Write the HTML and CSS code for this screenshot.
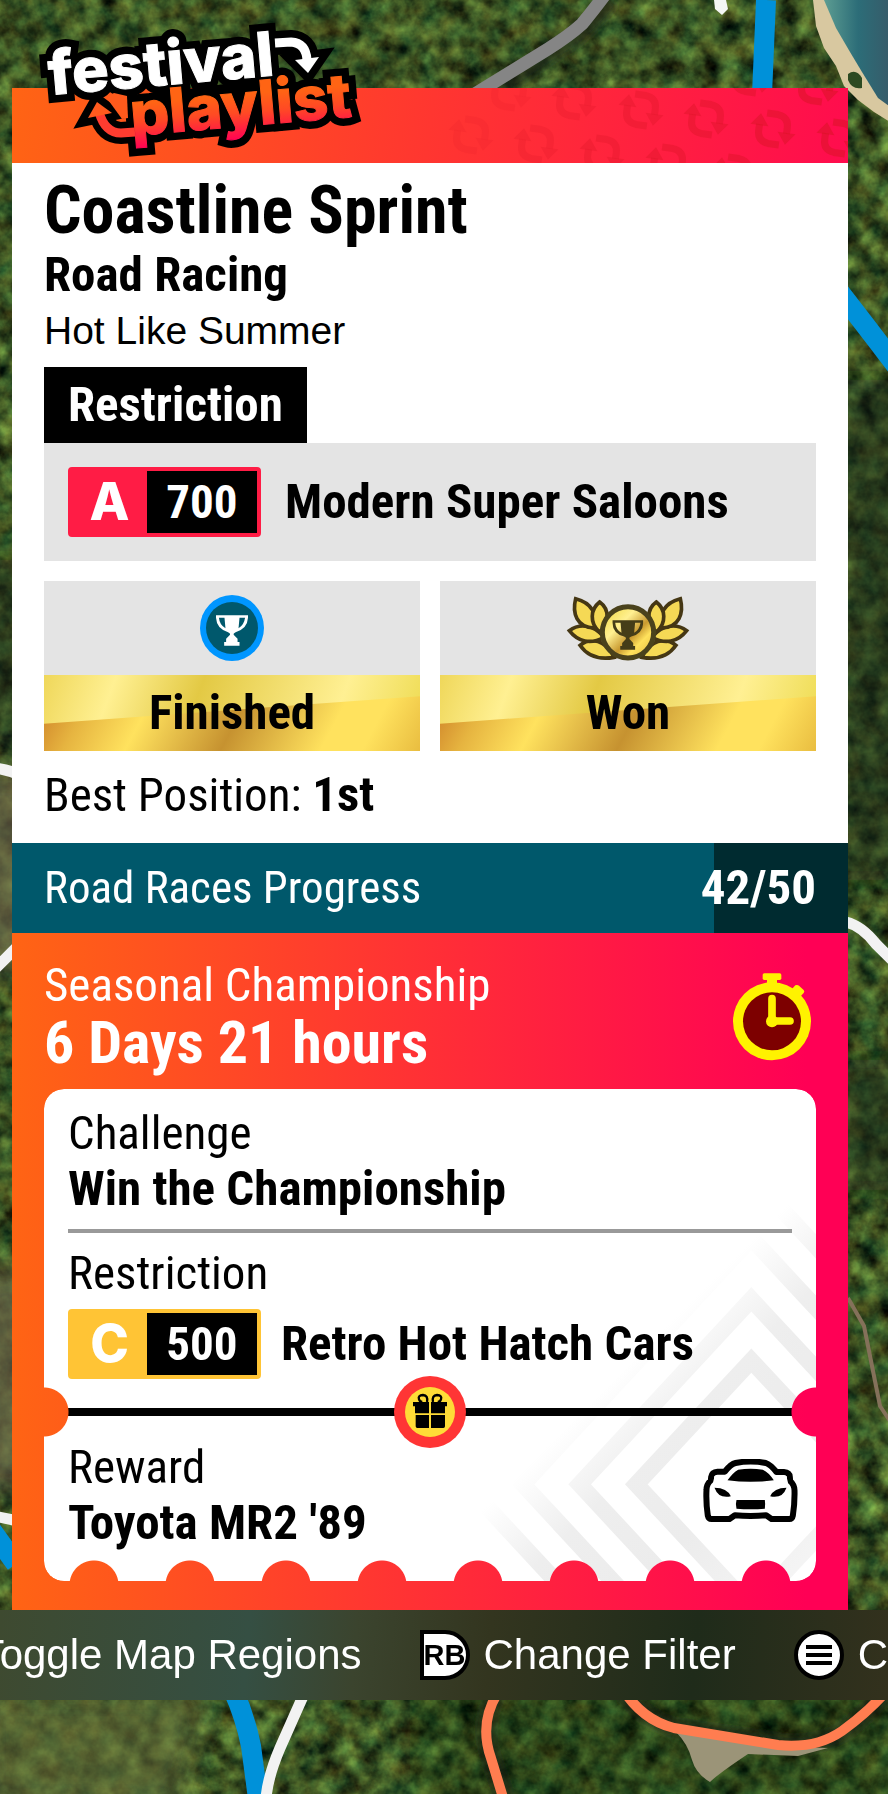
FILE: index.html
```html
<!DOCTYPE html>
<html lang="en">
<head>
  <meta charset="UTF-8" />
  <meta name="viewport" content="width=device-width, initial-scale=1.0" />
  <title>Festival Playlist - Coastline Sprint</title>
  <link rel="stylesheet" href="styles.css">
</head>
<body>

<!-- Map -->
<svg class="map" viewBox="0 0 888 1794" preserveAspectRatio="xMidYMid slice" aria-hidden="true">
  <defs>
    <filter id="trees" x="0" y="0" width="100%" height="100%" color-interpolation-filters="sRGB">
      <feTurbulence type="fractalNoise" baseFrequency="0.05" numOctaves="4" seed="21" />
      <feColorMatrix values="0.55 0.25 0 0 -0.17  0.55 0.5 0 0 -0.2  0.2 0.25 0 0 -0.09  0 0 0 0 1" />
    </filter>
    <filter id="soft"><feGaussianBlur stdDeviation="14" /></filter>
    <filter id="edge" x="-20%" y="-20%" width="140%" height="140%"><feGaussianBlur stdDeviation="3" /></filter>
    <linearGradient id="sea" x1="0" y1="0" x2="1" y2="0">
      <stop offset="0" stop-color="#5d9d92" />
      <stop offset="0.5" stop-color="#2c6d78" />
      <stop offset="1" stop-color="#375a68" />
    </linearGradient>
  </defs>
  <rect width="888" height="1794" filter="url(#trees)" />
  <g filter="url(#soft)">
    <path d="M836 380h80v500h-80zM836 1060h80v130h-80z" fill="#10200f" opacity="0.5" />
    <path d="M-20 560h50v180h-50z" fill="#14240f" opacity="0.5" />
    <path d="M-20 770h50v200h-50zM-20 1270h50v220h-50z" fill="#6b6349" opacity="0.75" />
    <path d="M-20 1690h230l-30 120h-200z" fill="#68703c" opacity="0.6" />
    <path d="M410 1690h500v120h-500z" fill="#10240f" opacity="0.25" />
  </g>
  <!-- coast -->
  <path d="M813 0l3 26 8 22 12 18 8 20 14 14 16 12 16 10V0z" fill="#d8c8a0" />
  <path d="M824 0l12 28 14 24 12 20 16 26 14 10V0z" fill="url(#sea)" />
  <path d="M848 74q8-6 14 4v10q-10 2-14-8z" fill="#2d4a22" />
  <path d="M714 0h12l2 9-6 6-7-6z" fill="#f4f6f4" />
  <!-- roads -->
  <g fill="none">
    <path d="M480 100l84-56q20-12 46-44" stroke="#1a2214" stroke-width="20" opacity="0.6" filter="url(#edge)" />
    <path d="M470 97l78-48q22-14 34-25 10-12 22-28" stroke="#858585" stroke-width="13" />
    <path d="M766 0l-4 95M838 290q28 36 60 78M-10 1528l26 36M233 1690q12 26 18 56 4 30 8 60" stroke="#0091d9" stroke-width="20" />
    <path d="M-6 768q16 2 28 8M-6 970l24-24M846 922q16 4 30 22l20 20M-6 1516l24 5M304 1694l-24 54q-12 28-14 50" stroke="#f2f2f2" stroke-width="11" />
    <path d="M496 1694q-16 30-6 60l16 48M622 1690q20 28 52 38l108 16q40 4 66-16 26-20 44-44" stroke="#1a2214" stroke-width="18" opacity="0.7" filter="url(#edge)" />
    <path d="M676 1732l92 14 60 2-30 8-50-2q-30 20-38 28-14-8-18-22-4-16-16-28z" fill="#9b9478" />
    <path d="M497 1694q-18 30-6 64l14 46M622 1688q20 32 52 40l104 17q38 4 64-14 28-20 50-46" stroke="#ff7d50" stroke-width="10" />
    <path d="M848 1298l16 28 8 40 8 40 12 18" stroke="#84715a" stroke-width="4" />
  </g>
</svg>

<!-- Shared drawings -->
<svg class="defs" aria-hidden="true">
  <symbol id="trophy" viewBox="0 0 98 94">
    <path fill-rule="evenodd" d="M0 0h98v8q-2 34-38 44-8 3-6 8l12 12v10h6v12H25V82h6V72l12-12q2-5-6-8Q2 42 0 8zM9 8q2 22 20 32L26 8zM89 8H72l-3 32Q86 30 89 8z" />
  </symbol>
  <g id="loop">
    <path d="M-8-15H3Q14-14 14-3v6" fill="none" stroke="currentColor" stroke-width="7" />
    <path d="M5 2h18L14 14z" fill="currentColor" />
    <path d="M8 15H-3Q-14 14-14 3v-6" fill="none" stroke="currentColor" stroke-width="7" />
    <path d="M-5-2h-18L-14-14z" fill="currentColor" />
  </g>
</svg>

<main class="screen">
  <article class="event">

    <header class="banner">
      <svg class="banner-pattern" viewBox="0 0 420 75" preserveAspectRatio="xMaxYMid slice" aria-hidden="true">
        <use href="#loop" transform="translate(81 4) rotate(8)" opacity="0.25" />
        <use href="#loop" transform="translate(146 13) rotate(8)" opacity="0.45" />
        <use href="#loop" transform="translate(213 22) rotate(8)" opacity="0.6" />
        <use href="#loop" transform="translate(278 31) rotate(8)" opacity="0.75" />
        <use href="#loop" transform="translate(345 41) rotate(8)" opacity="0.9" />
        <use href="#loop" transform="translate(411 50) rotate(8)" />
        <use href="#loop" transform="translate(43 47) rotate(8)" opacity="0.25" />
        <use href="#loop" transform="translate(108 56) rotate(8)" opacity="0.4" />
        <use href="#loop" transform="translate(174 66) rotate(8)" opacity="0.55" />
        <use href="#loop" transform="translate(240 75) rotate(8)" opacity="0.7" />
        <use href="#loop" transform="translate(306 85) rotate(8)" opacity="0.8" />
        <use href="#loop" transform="translate(322 -11) rotate(8)" opacity="0.8" />
        <use href="#loop" transform="translate(388 -2) rotate(8)" />
      </svg>
      <svg class="logo" viewBox="40 16 330 146" role="img" aria-label="festival playlist">
        <defs>
          <linearGradient id="playlist-fill" gradientUnits="userSpaceOnUse" x1="0" y1="-32" x2="0" y2="14">
            <stop offset="0" stop-color="#ff6414" />
            <stop offset="0.4" stop-color="#ff4a24" />
            <stop offset="1" stop-color="#ff0055" />
          </linearGradient>
        </defs>
        <g class="logo-outline">
          <text transform="translate(50 95) rotate(-5)">festival</text>
          <text transform="translate(132 136) rotate(-5)">playlist</text>
          <path d="M275 43l16-1q15 1 16 17" fill="none" stroke-width="24" />
          <path d="M295 60l24-3-11 16zM88 118l9-16 15 11z" stroke-width="15" stroke-linejoin="miter" />
          <path d="M99 112q6 21 22 21l14-1" fill="none" stroke-width="22" />
          <path d="M150 94l120-16 40 6-12 26-130 12z" stroke="none" />
        </g>
        <path d="M106 97l8-4 13 3 1 22-6 1z" fill="#ff5a1c" />
        <g class="logo-face">
          <path d="M275 43l16-1q15 1 16 18" fill="none" stroke="#fff" stroke-width="9" />
          <path d="M295 60l24-3-11 16z" fill="#fff" />
          <path d="M99 112q6 21 22 21l14-1" fill="none" stroke="#ff3c30" stroke-width="9" />
          <path d="M88 118l9-16 15 11z" fill="#ff5a1e" />
          <text transform="translate(50 95) rotate(-5)">festival</text>
          <text class="logo-playlist" transform="translate(132 136) rotate(-5)">playlist</text>
        </g>
      </svg>
    </header>

    <section class="details">
      <h1>Coastline Sprint</h1>
      <h2>Road Racing</h2>
      <p class="series">Hot Like Summer</p>

      <h3 class="tag">Restriction</h3>
      <div class="restriction">
        <span class="class-badge class-a"><b>A</b><span>700</span></span>
        <strong>Modern Super Saloons</strong>
      </div>

      <div class="results">
        <div class="result">
          <div class="result-icon">
            <svg width="66" height="66" viewBox="0 0 66 66" aria-hidden="true">
              <ellipse cx="33" cy="33" rx="32" ry="33" fill="#0096ff" />
              <ellipse cx="33" cy="33" rx="26" ry="26" fill="#00586c" />
              <use href="#trophy" x="17" y="20" width="32" height="31" fill="#fff" />
            </svg>
          </div>
          <p class="gold">Finished</p>
        </div>
        <div class="result">
          <div class="result-icon">
            <svg width="124" height="66" viewBox="366 465 372 198" aria-hidden="true">
              <defs>
                <linearGradient id="coin" x1="0" y1="0" x2="1" y2="1">
                  <stop offset="0.1" stop-color="#f3dc50" />
                  <stop offset="0.35" stop-color="#fff091" />
                  <stop offset="0.58" stop-color="#c99a30" />
                  <stop offset="0.72" stop-color="#ffe15c" />
                  <stop offset="1" stop-color="#e0b63c" />
                </linearGradient>
                <g id="laurel" fill="#f5d955" stroke="#453714" stroke-width="11">
                  <path d="M408 616C440 590 486 600 510 652 465 660 430 648 408 616z" />
                  <path d="M376 572C405 550 450 552 480 592 440 614 402 606 376 572z" />
                  <path d="M395 476C384 520 398 562 451 564 462 525 444 488 395 476z" />
                  <path d="M467 486C439 508 436 548 466 576 496 552 498 508 467 486z" />
                </g>
              </defs>
              <use href="#laurel" />
              <use href="#laurel" transform="translate(1104 0) scale(-1 1)" />
              <circle cx="552" cy="577" r="77" fill="url(#coin)" stroke="#4a421c" stroke-width="15" />
              <use href="#trophy" x="505" y="540" width="93" height="90" fill="#453d18" />
            </svg>
          </div>
          <p class="gold">Won</p>
        </div>
      </div>

      <p class="best">Best Position: <b>1st</b></p>
    </section>

    <section class="progress-row">
      <progress id="races" max="50" value="42"></progress>
      <label for="races">Road Races Progress</label>
      <b>42/50</b>
    </section>

    <section class="seasonal">
      <div class="seasonal-head">
        <div>
          <p>Seasonal Championship</p>
          <p class="time-left">6 Days 21 hours</p>
        </div>
        <svg class="stopwatch" width="78" height="88" viewBox="399 460 234 264" aria-hidden="true">
          <g fill="#fff200">
            <rect x="488" y="461" width="56" height="20" rx="5" />
            <path d="M501 478h30v20h-30zM576 508l10-11q6-3 11 1l14 13q4 5 0 9l-11 12z" />
            <circle cx="516" cy="605" r="117" />
          </g>
          <circle cx="516" cy="605" r="87" fill="#7d0000" />
          <path d="M516 537v67h54" fill="none" stroke="#fff200" stroke-width="23" stroke-linecap="round" />
          <circle cx="516" cy="605" r="18" fill="#fff200" />
        </svg>
      </div>

      <div class="ticket">
        <svg class="ticket-pattern" viewBox="0 0 1068 1203" aria-hidden="true">
          <defs>
            <linearGradient id="fade" gradientUnits="userSpaceOnUse" x1="530" y1="530" x2="1110" y2="1110">
              <stop offset="0" stop-color="#fff" />
              <stop offset="0.28" stop-color="#eee" />
              <stop offset="0.6" stop-color="#ececec" />
              <stop offset="1" stop-color="#f5f5f5" />
            </linearGradient>
          </defs>
          <g fill="none" stroke="url(#fade)" stroke-width="50">
            <path d="M874 542l345 371-345 371-345-371z" />
            <path d="M874 358l515 555-515 555-515-555z" />
            <path d="M874 174l685 739-685 739-685-739z" />
            <path d="M874-10l856 923-856 923L18 913z" />
          </g>
        </svg>

        <div class="ticket-part">
          <p>Challenge</p>
          <p><b>Win the Championship</b></p>
        </div>
        <hr>
        <div class="ticket-part">
          <p>Restriction</p>
          <div class="ticket-class">
            <span class="class-badge class-c"><b>C</b><span>500</span></span>
            <strong>Retro Hot Hatch Cars</strong>
          </div>
        </div>
        <div class="tear">
          <svg class="gift" width="72" height="72" viewBox="0 0 216 216" aria-hidden="true">
            <circle cx="108" cy="108" r="108" fill="#ff3535" />
            <circle cx="108" cy="108" r="75" fill="#ffdc37" />
            <path d="M57 78h48v34H63V91h-6zM111 78h48v13h-6v21h-42zM65 117h40v39H70q-5 0-5-5zM111 117h42v34q0 5-5 5h-37z" />
            <path d="M99 78q4-20-12-21-16 1-12 13 2 8 10 8M117 78q-4-20 12-21 16 1 12 13-2 8-10 8" fill="none" stroke="#000" stroke-width="7" />
          </svg>
        </div>
        <div class="reward">
          <div class="ticket-part">
            <p>Reward</p>
            <p><b>Toyota MR2 '89</b></p>
          </div>
          <svg class="car" width="95" height="64" viewBox="728 834 284 192" aria-hidden="true">
            <path d="M793 872q18-23 32-26 45-9 91 0 13 4 32 27l22 0q17 1 18 15l1 12q13 12 13 28 1 40-5 76-2 10-10 10l-54 0-16-11q-47 4-94 0l-16 11-54 0q-9 0-11-10-6-38-4-78 0-16 13-28l1-10q2-15 19-16z" fill="#fff" stroke="#000" stroke-width="18" stroke-linejoin="round" />
            <path d="M762 885q12-5 20 0l10 6q-12 4-22 10l-14 14M978 885q-12-5-20 0l-10 6q12 4 22 10l14 14" fill="#fff" />
            <path d="M801 898q16-23 32-32 37-5 74 0 18 8 33 32-70 9-139 0zM762 920q38 0 49 26-37 8-49-26zM978 920q-38 0-49 26 37 8 49-26zM828 957h85q2 14 0 26-42 3-85 0-4-13 0-26z" />
          </svg>
        </div>
      </div>
    </section>
  </article>

  <!-- Controls -->
  <nav class="controls">
    <button type="button">Toggle Map Regions</button>
    <button type="button">
      <span class="key-rb">RB</span>
      Change Filter
    </button>
    <button type="button">
      <svg width="50" height="50" viewBox="0 0 50 50" aria-hidden="true">
        <circle cx="25" cy="25" r="23" fill="#fff" stroke="#000" stroke-width="4" />
        <path d="M12 17h26M12 25h26M12 33h26" stroke="#000" stroke-width="4" />
      </svg>
      C
    </button>
  </nav>
</main>

</body>
</html>
```

FILE: styles.css
```css
* {
  box-sizing: border-box;
}

body {
  margin: 0;
  background: #2c4020;
  color: #000;
  font-family: "Roboto Condensed", "Liberation Sans Narrow", "Liberation Sans", sans-serif;
  font-size: 47px;
  line-height: 56px;
}

h1, h2, h3, p {
  margin: 0;
}

h2, h3, b, strong {
  font-size: 49px;
  font-weight: bold;
}

.map {
  position: absolute;
  inset: 0;
  z-index: -1;
  width: 100%;
  height: 100%;
}

.defs {
  position: absolute;
  width: 0;
  height: 0;
}

.screen {
  position: relative;
  padding: 88px 0 94px;
  overflow: hidden;
}

.event {
  margin: 0 40px 0 12px;
}

/* banner */
.banner {
  position: relative;
  height: 75px;
  background: linear-gradient(98deg, #ff6414, #ff3630 50%, #ff0c4e);
}

.banner-pattern {
  position: absolute;
  top: 0;
  right: 0;
  width: 420px;
  height: 75px;
  color: rgba(215, 20, 35, 0.5);
}

.logo {
  position: absolute;
  top: -72px;
  left: 28px;
  width: 330px;
  height: 146px;
  overflow: visible;
  font-family: Inter, "Liberation Sans", sans-serif;
  font-size: 61px;
  font-weight: 800;
}

.logo-outline {
  fill: #000;
  stroke: #000;
  stroke-width: 16px;
}

.logo-face text {
  fill: #fff;
  stroke: #fff;
  stroke-width: 1px;
}

.logo-face .logo-playlist {
  fill: url(#playlist-fill);
  stroke: url(#playlist-fill);
}

/* event details */
.details {
  padding: 16px 32px 20px;
  background: #fff;
}

.details h1 {
  margin-bottom: 4px;
  font-size: 66px;
  line-height: 64px;
}

.series {
  margin: 4px 0 12px;
  font-family: "Liberation Sans", sans-serif;
  font-size: 39px;
  line-height: 48px;
}

.tag {
  width: fit-content;
  padding: 10px 24px;
  background: #000;
  color: #fff;
}

.restriction {
  display: flex;
  align-items: center;
  gap: 24px;
  padding: 24px;
  background: #e4e4e4;
}

.class-badge {
  display: grid;
  grid-template-columns: 75px 110px;
  flex: none;
  border: 4px solid;
  border-radius: 4px;
  font-weight: bold;
  line-height: 62px;
  text-align: center;
}

.class-badge b {
  color: #fff;
  font-family: Inter, "Liberation Sans", sans-serif;
  font-size: 52px;
  font-weight: 800;
}

.class-badge span {
  background: #000;
  color: #fff;
  font-size: 47px;
}

.class-a {
  background: #ff1c45;
  border-color: #ff1c45;
}

.class-c {
  background: #ffc435;
  border-color: #ffc435;
}

.results {
  display: grid;
  grid-template-columns: 1fr 1fr;
  gap: 20px;
  margin: 20px 0 16px;
}

.result-icon {
  display: flex;
  align-items: center;
  justify-content: center;
  height: 94px;
  background: #e4e4e4;
}

.gold {
  position: relative;
  z-index: 0;
  padding: 10px;
  background: linear-gradient(110deg, #efd75a, #fff092 18%, #e3c944 40%, #fff093 76%, #ecd94c);
  font-size: 49px;
  font-weight: bold;
  text-align: center;
}

.gold::before {
  content: "";
  position: absolute;
  inset: 0;
  z-index: -1;
  background: linear-gradient(118deg, #cf8328 3%, #e6b440 14%, #ffe25e 29%, #c69230 52%, #ffe25e 76%, #ffe25e 86%, #e9bd40);
  clip-path: polygon(0 64%, 100% 28%, 100% 100%, 0 100%);
}

/* progress */
.progress-row {
  position: relative;
  display: flex;
  align-items: center;
  justify-content: space-between;
  height: 90px;
  padding: 0 32px;
  color: #fff;
}

.progress-row label {
  font-size: 45px;
}

.progress-row progress {
  position: absolute;
  inset: 0;
  z-index: -1;
  width: 100%;
  height: 100%;
  border: 0;
  appearance: none;
}

.progress-row progress::-webkit-progress-bar {
  background: #002b30;
}

.progress-row progress::-webkit-progress-value {
  background: #00586b;
}

/* seasonal championship */
.seasonal {
  padding: 24px 32px 29px;
  background: linear-gradient(90deg, #ff6414, #ff2d37 52%, #ff0055 95%);
}

.seasonal-head {
  display: flex;
  align-items: flex-end;
  justify-content: space-between;
  padding-right: 5px;
  color: #fff;
}

.time-left {
  font-size: 60px;
  font-weight: bold;
  line-height: 60px;
}

.stopwatch {
  margin-bottom: 12px;
}

.ticket {
  position: relative;
  z-index: 0;
  margin-top: 16px;
  padding: 16px 24px 30px;
  border-radius: 20px;
  background: #fff;
  /* side notches and the perforated bottom edge */
  -webkit-mask:
    radial-gradient(circle at 0 calc(100% - 169px), transparent 24px, #000 25px),
    radial-gradient(circle at 100% calc(100% - 169px), transparent 24px, #000 25px),
    radial-gradient(circle at 48px calc(100% + 4px), transparent 24px, #000 25px) 2px 0 / 96px 100% repeat-x;
  -webkit-mask-composite: source-in;
  mask-composite: intersect;
}

.ticket-pattern {
  position: absolute;
  right: 0;
  bottom: 0;
  z-index: -1;
  width: 356px;
  height: 401px;
}

.ticket hr {
  height: 4px;
  margin: 12px 0;
  border: 0;
  background: #999;
}

.ticket-class {
  display: flex;
  align-items: center;
  gap: 20px;
  margin-top: 8px;
}

.tear {
  position: relative;
  height: 8px;
  margin: 29px 0 23px;
  background: #000;
}

.gift {
  position: absolute;
  top: 50%;
  left: 50%;
  transform: translate(-50%, -50%);
}

.reward {
  display: flex;
  align-items: flex-start;
  justify-content: space-between;
  margin-right: -6px;
}

.car {
  margin-top: 20px;
}

/* bottom controls */
.controls {
  display: flex;
  align-items: center;
  justify-content: flex-end;
  gap: 58px;
  height: 90px;
  overflow: hidden;
  background: linear-gradient(95deg, #3e4a30, #354f43 28%, #3b442e 40%, #33351f 55%, #1f2b1a 78%, #33311d);
}

.controls button {
  display: flex;
  flex: none;
  align-items: center;
  gap: 14px;
  padding: 0;
  border: 0;
  background: none;
  color: #fff;
  font-family: "Liberation Sans", sans-serif;
  font-size: 42px;
  white-space: nowrap;
}

.key-rb {
  width: 50px;
  height: 50px;
  border: 4px solid #000;
  border-radius: 0 25px 25px 0;
  background: #fff;
  color: #000;
  font-size: 29px;
  font-weight: bold;
  line-height: 42px;
  text-align: left;
}
```
